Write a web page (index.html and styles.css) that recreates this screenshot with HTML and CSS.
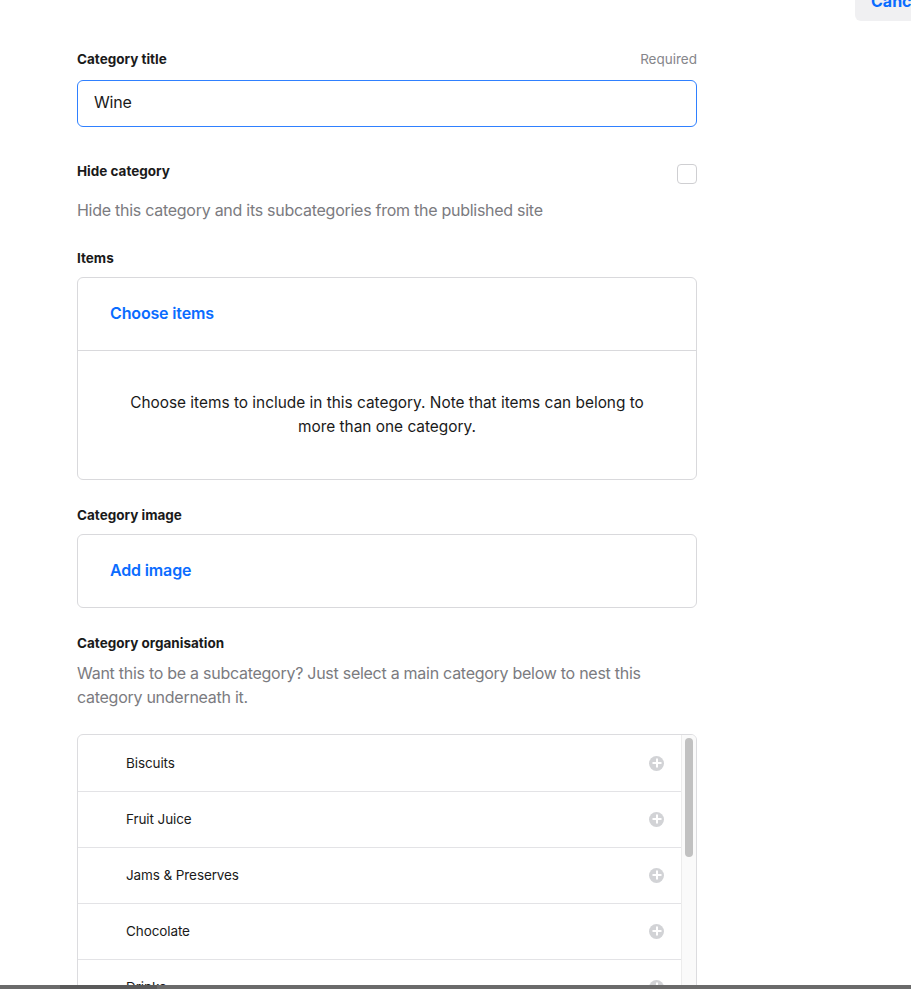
FILE: index.html
```html
<!DOCTYPE html>
<html>
    <head>
        <title>Edit category</title>
        <meta name="viewport" content="width=device-width, initial-scale=1.0">
        <link rel="stylesheet" href="styles.css">
    </head>
    <body>
        <button class="btn-cancel">Cancel</button>

        <form class="category-form">
            <!-- Title -->
            <div class="label-row">
                <label class="label" for="title">Category title</label>
                <span class="hint">Required</span>
            </div>
            <input class="text-input" id="title" type="text" value="Wine">

            <!-- Hide -->
            <div class="label-row hide-row">
                <span class="label">Hide category</span>
                <span class="checkbox"></span>
            </div>
            <p class="desc">Hide this category and its subcategories from the published site</p>

            <!-- Items -->
            <h3 class="label section-label">Items</h3>
            <div class="panel">
                <div class="panel-head"><a class="link">Choose items</a></div>
                <div class="panel-body">
                    Choose items to include in this category. Note that items can belong to more than one category.
                </div>
            </div>

            <!-- Image -->
            <h3 class="label section-label after-panel">Category image</h3>
            <div class="panel">
                <div class="panel-head"><a class="link">Add image</a></div>
            </div>

            <!-- Organisation -->
            <h3 class="label section-label after-panel">Category organisation</h3>
            <p class="desc desc-org">Want this to be a subcategory? Just select a main category below to nest this category underneath it.</p>

            <div class="cat-list">
                <ul class="cat-rows">
                    <li>Biscuits <span class="plus"></span></li>
                    <li>Fruit Juice <span class="plus"></span></li>
                    <li>Jams &amp; Preserves <span class="plus"></span></li>
                    <li>Chocolate <span class="plus"></span></li>
                    <li>Drinks <span class="plus"></span></li>
                    <li>Cheese <span class="plus"></span></li>
                </ul>
                <div class="track"><div class="thumb"></div></div>
            </div>
        </form>

        <div class="page-scroll"><div class="page-thumb"></div></div>
    </body>
</html>
```

FILE: styles.css
```css
/* ---- General ---- */
* {
    box-sizing: border-box;
    font-family: Inter, 'Noto Sans', sans-serif;
}

body {
    margin: 0;
    background: #fff;
    color: #1a1a1a;
    overflow: hidden;
}

.category-form {
    display: flex;
    flex-direction: column;
    width: 620px;
    margin-left: 77px;
    padding-top: 50px;
}

/* ---- Labels ---- */
.label-row {
    display: flex;
    justify-content: space-between;
    align-items: flex-start;
}

.label {
    font-size: 13.5px;
    font-weight: 700;
    line-height: 18px;
    margin: 0;
    color: #1a1a1a;
}

.hint {
    font-size: 13.5px;
    line-height: 18px;
    color: #86868b;
}

.section-label {
    margin-top: 27px;
}

.after-panel {
    margin-top: 26px;
}

.desc {
    margin: 14px 0 0;
    font-size: 16px;
    line-height: 24px;
    letter-spacing: -0.27px;
    color: #7b7b80;
}

.desc-org {
    margin-top: 9px;
}

/* ---- Controls ---- */
.text-input {
    margin-top: 12px;
    height: 47px;
    width: 100%;
    padding: 0 16px 3px;
    border: 1px solid #2f80ff;
    border-radius: 6px;
    font-size: 16px;
    letter-spacing: -0.2px;
    color: #1a1a1a;
    outline: 0;
}

.hide-row {
    margin-top: 35px;
}

.checkbox {
    width: 20px;
    height: 20px;
    margin-top: 2px;
    border: 1px solid #cfcfd2;
    border-radius: 4px;
}

/* ---- Panels ---- */
.panel {
    margin-top: 10px;
    border: 1px solid #d9d9dc;
    border-radius: 6px;
}

.panel-head {
    display: flex;
    align-items: center;
    height: 72px;
    padding: 0 0 2px 32px;
}

.link {
    color: #0a6cff;
    font-size: 16px;
    font-weight: 600;
    letter-spacing: -0.15px;
    cursor: pointer;
}

.panel-body {
    border-top: 1px solid #d9d9dc;
    padding: 40px 40px 40px;
    font-size: 15.4px;
    line-height: 24px;
    text-align: center;
}

/* ---- Category list ---- */
.cat-list {
    display: flex;
    margin-top: 25px;
    height: 340px;
    border: 1px solid #dcdcdf;
    border-radius: 6px;
    overflow: hidden;
}

.cat-rows {
    flex: 1;
    list-style: none;
    margin: 0;
    padding: 1px 0 0;
}

.cat-rows li {
    display: flex;
    align-items: center;
    justify-content: space-between;
    height: 56px;
    padding: 0 17px 1px 48px;
    border-bottom: 1px solid #e3e3e6;
    font-size: 13.5px;
    letter-spacing: -0.1px;
    color: #1a1a1a;
}

.plus {
    position: relative;
    width: 15px;
    height: 15px;
    border-radius: 50%;
    background: #d2d3d6;
}

.plus::before, .plus::after {
    content: "";
    position: absolute;
    background: #fff;
    left: 50%;
    top: 50%;
    transform: translate(-50%, -50%);
}

.plus::before {
    width: 9px;
    height: 2px;
}

.plus::after {
    width: 2px;
    height: 9px;
}

.track {
    width: 15px;
    background: #fafafa;
    border-left: 1px solid #ececec;
    padding: 3px 3px 0 3px;
}

.thumb {
    height: 119px;
    background: #c1c1c1;
    border-radius: 4px;
}

/* ---- Overlays ---- */
.btn-cancel {
    position: absolute;
    top: -19px;
    left: 855px;
    width: 90px;
    height: 40px;
    padding: 0 0 0 16px;
    text-align: left;
    background: #f0f0f2;
    border: 0;
    border-radius: 6px;
    color: #0a6cff;
    font-size: 16px;
    font-weight: 700;
}

.page-scroll {
    position: fixed;
    left: 0;
    right: 0;
    bottom: 0;
    height: 4px;
    background: #6b6b6b;
}

.page-thumb {
    margin-left: 60px;
    width: 97px;
    height: 4px;
    background: #5a5a5a;
}
```
